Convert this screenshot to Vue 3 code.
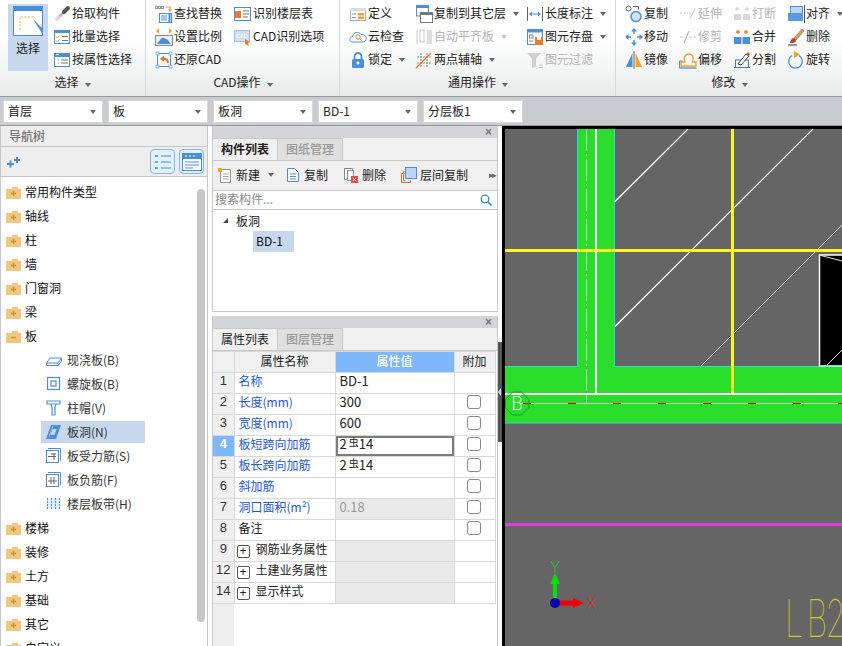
<script setup>
const blue = '#4a8fd8'
const org = '#f0a030'
const gry = '#8a8a8a'
const off = '#c8c8c8'

const icons = {
  pick: `<path d="M3 15 12 6" stroke="#b8b8b8" stroke-width="3"/><path d="M3 15 7 11" stroke="#d8d8d8" stroke-width="3"/><path d="M11 7 15 3" stroke="#555" stroke-width="4" stroke-linecap="round"/>`,
  batch: `<rect x="1.500" y="2.500" width="15" height="13" fill="#fff" stroke="${blue}"/><rect x="1" y="2" width="16" height="3" fill="${blue}"/><path d="M3 8.500 4.500 10 6.500 7.500M3 12.500 4.500 14 6.500 11.500" fill="none" stroke="${org}"/><path d="M9 8.500h6M9 12.500h6" stroke="#777"/>`,
  attr: `<rect x="1.500" y="2.500" width="15" height="13" fill="#fff" stroke="${blue}"/><rect x="1" y="2" width="16" height="4" fill="${blue}"/><path d="M3 3.500h3" stroke="#fff"/><path d="M5 9h1M5 12h1" stroke="${blue}"/><path d="M8 9h7M8 12h7" stroke="#777"/>`,
  find: `<path d="M0 1h9v3H0z" fill="#999"/><path d="M1 2.500h1M4 2.500h1M7 2.500h1" stroke="#fff"/><path d="M11 2h4v3" fill="none" stroke="${org}" stroke-width="1.200"/><path d="m13 4.500 2 2.500 2-2.500z" fill="${org}"/><rect x="4.500" y="8.500" width="12" height="9" fill="#fff" stroke="${blue}"/><path d="M6 11h6M6 13h6M6 15h6" stroke="${blue}"/><path d="M14.500 9v8" stroke="${blue}" stroke-width="2"/>`,
  floors: `<rect x=".5" y="2.500" width="16" height="13" fill="#fff" stroke="${blue}"/><rect x="1" y="6" width="6" height="7" fill="#ef7b22"/><path d="M9 6h6M9 9h6M9 12h5" stroke="#777"/>`,
  scale: `<path d="M1 3 4 0v6zM17 3l-3-3v6z" fill="${org}"/><rect x=".5" y="7.500" width="17" height="10" fill="#eee" stroke="#888"/><path d="M2 16c2-2 3-5 5-6s3 1 4 1 2 1 5 5z" fill="${blue}"/>`,
  cad: `<rect x=".5" y="2.500" width="15" height="11" fill="#cfe0f5" stroke="#9fbce0"/><text x="2" y="10" font-size="5.500" fill="#fff" font-family="Liberation Sans">CAD</text><path d="M11 11l5 3-2 1 1 3-4-2z" fill="#ef7b22"/>`,
  restore: `<rect x="2.500" y="2.500" width="13" height="13" fill="none" stroke="${blue}"/><path d="M1 1h3v3H1zM14 1h3v3h-3zM1 14h3v3H1zM14 14h3v3h-3z" fill="#fff" stroke="${blue}" stroke-width=".6"/><path d="M13 12c0-3-2-5-5-4" fill="none" stroke="#e2701f" stroke-width="1.800"/><path d="m9 4.500-4 3.500 4 2.500z" fill="#e2701f"/>`,
  define: `<rect x="1.500" y="3.500" width="15" height="12" fill="#fff" stroke="#aaa"/><rect x="1" y="3" width="16" height="3" fill="#d4dde8"/><rect x="9" y="8" width="6" height="2.500" fill="${org}"/><rect x="9" y="11.500" width="6" height="2.500" fill="${org}"/><path d="M3 9h4M3 12.500h4" stroke="#999"/>`,
  cloud: `<path d="M4 14C0 14 0 9 3.500 8.500 4 4 10 3 12 6.500c4-.5 6 2.500 5 5-.5 2-2 2.500-3 2.500z" fill="#fff" stroke="${blue}"/><circle cx="9" cy="9" r="2.200" fill="none" stroke="#ef7b22"/><path d="m10.500 10.500 2 2" stroke="#ef7b22"/>`,
  lock: `<path d="M5.500 8V5.500a3.500 3.500 0 0 1 7 0V8" fill="none" stroke="${blue}" stroke-width="1.800"/><rect x="3" y="8" width="12" height="9" rx="1.500" fill="${blue}"/><circle cx="9" cy="12" r="1.500" fill="#fff"/>`,
  copyTo: `<rect x="1.500" y="1" width="12" height="10" fill="#fff" stroke="${blue}"/><rect x="1" y="0" width="13" height="3" fill="${blue}"/><rect x="5.500" y="7.500" width="12" height="10" fill="#fff" stroke="#777"/><rect x="5" y="7" width="13" height="3" fill="#777"/>`,
  autoAlign: `<path d="M2 2v14" stroke="${off}"/><rect x="5" y="2" width="4" height="12" fill="none" stroke="${off}"/><rect x="12" y="2" width="5" height="14" fill="#ddd"/>`,
  twoPoint: `<path d="M6 2v14M12 2v14M2 6h14M2 12h14" stroke="#888" stroke-dasharray="2 1"/><path d="M1 17 16 2" stroke="#e2701f" stroke-width="1.200"/>`,
  dim: `<path d="M1.500 2v14M16.500 2v14" stroke="#666"/><path d="M4 9h10" stroke="${blue}"/><path d="M3 9l3-2.500v5zM15 9l-3-2.500v5z" fill="${blue}"/>`,
  save: `<rect x="1.500" y="1.500" width="15" height="15" fill="#fff" stroke="${blue}"/><rect x="1" y="1" width="16" height="3.500" fill="${blue}"/><rect x="3.500" y="7" width="3.500" height="3" fill="none" stroke="${gry}"/><path d="M3 13h4" stroke="${gry}"/><rect x="9" y="9" width="8" height="8" fill="#ef7b22"/><rect x="11" y="9" width="4" height="3" fill="#fff"/>`,
  filter: `<path d="M1 2h14l-5 6v8l-4 1V8z" fill="#d0d0d0"/><path d="M13 14h4M13 16.500h4" stroke="${off}"/>`,
  copy: `<circle cx="3.500" cy="3.500" r="2.500" fill="none" stroke="#666"/><circle cx="11" cy="11.500" r="5" fill="#cfe2f7" stroke="${blue}" stroke-width="1.500"/><path d="M8 1.500h5.500v3" fill="none" stroke="#666"/>`,
  extend: `<path d="M1 8h8" stroke="${off}" stroke-dasharray="2 1.500"/><path d="M11 14l5-11" stroke="${off}"/><path d="M10 8h2" stroke="${off}"/>`,
  breakIt: `<path d="M2 4h4M12 4h4M4 2v4M14 2v4" stroke="${off}"/><rect x="1" y="9" width="7" height="6" fill="#d8d8d8"/><rect x="10" y="9" width="7" height="6" fill="#d8d8d8"/>`,
  align: `<rect x="3.500" y="1.500" width="12" height="7" fill="#bcd6f4" stroke="${blue}"/><rect x="1" y="8" width="15" height="8" fill="#5a9ae0"/><path d="M17.500 0v18" stroke="#555"/>`,
  move: `<path d="M9 0 6 3.500h6zM9 18l-3-3.500h6zM0 9l3.500-3v6zM18 9l-3.500-3v6z" fill="${blue}"/><path d="M9 3v3M9 12v3M3 9h3M12 9h3" stroke="${blue}" stroke-width="1.400"/>`,
  trim: `<path d="M1 9h5M10 9h7" stroke="${off}" stroke-dasharray="3 1.500"/><path d="M5 15 10 3" stroke="#aaa"/>`,
  merge: `<path d="M5 2v4M3 4h4M13 2v4M11 4h4" stroke="#ef7b22" stroke-width="1.500"/><rect x="1" y="9" width="16" height="7" fill="${blue}"/><path d="M9 9v7" stroke="#fff"/>`,
  erase: `<path d="M1 17h9" stroke="#333"/><path d="M7 10 15 1l2 2-8 9z" fill="#d4a060" stroke="#7a5a30" stroke-width=".6"/><path d="M3 15c0-3 2-5 4-5l2 2c0 2-3 4-6 3z" fill="#b5431c"/>`,
  mirror: `<path d="M7.500 2v14H1z" fill="${blue}"/><path d="M10.500 2v14H17z" fill="${org}"/><path d="M9 0v18" stroke="#666"/>`,
  offset: `<path d="M2 15v-4h4c-2-5 0-8 4-8s5 3 3.500 8H17v4z" fill="none" stroke="${org}" stroke-width="1.300"/><path d="M.5 17h17" stroke="${blue}" stroke-width="1.300"/><path d="M.5 17v-7h3" fill="none" stroke="${blue}"/>`,
  split: `<path d="M1 16.500h16M2.500 9v8M15.500 9v8M2 9h14" stroke="#5577a8"/><path d="M5 13 13 3l3 2-8 9z" fill="#fff" stroke="#444"/><path d="M13 3l3 2 1-2-2-2z" fill="#d2582a"/>`,
  rotate: `<path d="M5 4.500a6.800 6.800 0 1 0 7 0" fill="none" stroke="${blue}" stroke-width="1.300"/><path d="M7 0v7l6-3.500z" fill="${org}"/>`,
}

const navIcons = {
  plate: `<path d="M1.500 12 5 7h11.500v3L13 14.500H1.500z" fill="#fff" stroke="${blue}"/><path d="M1.500 12H13l3.500-5M13 12v2.500" fill="none" stroke="${blue}"/>`,
  spiral: `<rect x="2.500" y="2.500" width="12" height="12" fill="none" stroke="${blue}" stroke-width="1.200"/><rect x="6" y="6" width="5" height="5" fill="none" stroke="${blue}" stroke-width="1.200"/>`,
  cap: `<path d="M2 2h13v3h-13zM6 5l1 3v8h3V8l1-3" fill="#fff" stroke="${blue}" stroke-width="1.200"/>`,
  hole: `<path d="M6 2h10l-5 14H1z" fill="${blue}"/><path d="M7.500 6h4L9.500 12h-4z" fill="#c6d7ee"/><path d="M4 14 8 3" stroke="#c6d7ee" stroke-width=".7"/>`,
  rebar: `<rect x="1.500" y="3.500" width="12" height="12" fill="#fff" stroke="${blue}"/><path d="M3 1.500h12.500V14" fill="none" stroke="${blue}"/><path d="M3 9.500h8M9 6v7M6 7h5" fill="none" stroke="#666"/>`,
  neg: `<rect x="1.500" y="3.500" width="12" height="12" fill="#fff" stroke="${blue}"/><path d="M3 1.500h12.500V14" fill="none" stroke="${blue}"/><path d="M3 10h9M6 6v7M9 6v7" fill="none" stroke="#666"/>`,
  band: `<rect x="2" y="3" width="13" height="11" fill="#e3eefa"/><path d="M2.500 3v11M14.500 3v11M6.500 3v11M10.500 3v11" stroke="${blue}" stroke-dasharray="2 1"/>`,
}

const groups = [
  {
    name: '选择', cls: 'g1',
    cols: [[
      { t: '拾取构件', i: 'pick' },
      { t: '批量选择', i: 'batch' },
      { t: '按属性选择', i: 'attr' },
    ]],
  },
  {
    name: 'CAD操作', cls: 'g2',
    cols: [
      [{ t: '查找替换', i: 'find' }, { t: '设置比例', i: 'scale' }, { t: '还原CAD', i: 'restore' }],
      [{ t: '识别楼层表', i: 'floors' }, { t: 'CAD识别选项', i: 'cad' }],
    ],
  },
  {
    name: '通用操作', cls: 'g3',
    cols: [
      [{ t: '定义', i: 'define' }, { t: '云检查', i: 'cloud' }, { t: '锁定', i: 'lock', drop: true }],
      [{ t: '复制到其它层', i: 'copyTo', drop: true }, { t: '自动平齐板', i: 'autoAlign', drop: true, off: true }, { t: '两点辅轴', i: 'twoPoint', drop: true }],
      [{ t: '长度标注', i: 'dim', drop: true }, { t: '图元存盘', i: 'save', drop: true }, { t: '图元过滤', i: 'filter', off: true }],
    ],
  },
  {
    name: '修改', cls: 'g4',
    cols: [
      [{ t: '复制', i: 'copy' }, { t: '移动', i: 'move' }, { t: '镜像', i: 'mirror' }],
      [{ t: '延伸', i: 'extend', off: true }, { t: '修剪', i: 'trim', off: true }, { t: '偏移', i: 'offset' }],
      [{ t: '打断', i: 'breakIt', off: true }, { t: '合并', i: 'merge' }, { t: '分割', i: 'split' }],
      [{ t: '对齐', i: 'align', drop: true }, { t: '删除', i: 'erase' }, { t: '旋转', i: 'rotate' }],
    ],
  },
]

const selects = ['首层', '板', '板洞', 'BD-1', '分层板1']

const navTree = [
  { t: '常用构件类型' }, { t: '轴线' }, { t: '柱' }, { t: '墙' }, { t: '门窗洞' }, { t: '梁' },
  { t: '板', open: true },
  { t: '现浇板(B)', i: 'plate' }, { t: '螺旋板(B)', i: 'spiral' }, { t: '柱帽(V)', i: 'cap' },
  { t: '板洞(N)', i: 'hole', sel: true }, { t: '板受力筋(S)', i: 'rebar' }, { t: '板负筋(F)', i: 'neg' },
  { t: '楼层板带(H)', i: 'band' },
  { t: '楼梯' }, { t: '装修' }, { t: '土方' }, { t: '基础' }, { t: '其它' }, { t: '自定义' },
]

const props = [
  { n: 1, name: '名称', val: 'BD-1' },
  { n: 2, name: '长度(mm)', val: '300', chk: true },
  { n: 3, name: '宽度(mm)', val: '600', chk: true },
  { n: 4, name: '板短跨向加筋', bar: true, chk: true, active: true },
  { n: 5, name: '板长跨向加筋', bar: true, chk: true },
  { n: 6, name: '斜加筋', val: '', chk: true },
  { n: 7, name: '洞口面积(m²)', val: '0.18', chk: true, calc: true },
  { n: 8, name: '备注', val: '', chk: true, plain: true },
  { n: 9, name: '钢筋业务属性', fold: true },
  { n: 12, name: '土建业务属性', fold: true },
  { n: 14, name: '显示样式', fold: true },
]

const redDashes = [523, 568, 613, 658, 703, 748, 793, 838]
</script>

<template>
  <div class="app">
    <header class="ribbon">
      <section v-for="g in groups" :key="g.name" class="group" :class="g.cls">
        <div class="group-body">
          <div v-if="g.cls === 'g1'" class="big-btn">
            <svg width="30" height="30" viewBox="0 0 30 30">
              <rect x=".5" y=".5" width="29" height="29" fill="#fff" stroke="#4a8fd8" />
              <rect x="0" y="0" width="30" height="5" fill="#4a8fd8" />
              <path d="M7 24V11h15" fill="none" stroke="#f5a623" stroke-dasharray="2 1.500" />
              <path d="M20 13v16h9.500v-1z M20 13l9 9v7h-9z" fill="#4a8fd8" />
            </svg>
            <span>选择</span>
          </div>
          <div v-for="(col, ci) in g.cols" :key="ci" class="col">
            <div v-for="item in col" :key="item.t" class="tool" :class="{ off: item.off }">
              <svg class="tool-icon" width="18" height="18" viewBox="0 0 18 18" v-html="icons[item.i]"></svg>
              <span>{{ item.t }}</span>
              <i v-if="item.drop" class="caret"></i>
            </div>
          </div>
        </div>
        <div class="group-label">{{ g.name }}<i class="caret"></i></div>
      </section>
    </header>

    <div class="selectbar">
      <div v-for="s in selects" :key="s" class="select">
        <span>{{ s }}</span>
        <i class="caret"></i>
      </div>
    </div>

    <main class="workspace">
      <aside class="nav">
        <div class="nav-title">导航树</div>
        <div class="nav-tools">
          <svg width="14" height="12" viewBox="0 0 14 12">
            <path d="M0 8h7M3.500 4.500v7M7 4h6M10 1v6" stroke="#4a8fd8" stroke-width="2" />
          </svg>
          <div class="nav-tool-btns">
            <button class="nav-btn">
              <svg width="18" height="16" viewBox="0 0 18 16">
                <path d="M1 2h3M1 8h3M1 14h3" stroke="#4a8fd8" stroke-width="1.500" />
                <path d="M7 2h10M7 8h10M7 14h10" stroke="#4a8fd8" />
              </svg>
            </button>
            <button class="nav-btn">
              <svg width="20" height="18" viewBox="0 0 20 18">
                <rect x=".5" y=".5" width="19" height="17" fill="#fff" stroke="#4a8fd8" />
                <rect x="0" y="0" width="20" height="6" fill="#4a8fd8" />
                <path d="M3 3h2M7 3h2M11 3h2" stroke="#fff" />
                <path d="M3 9h14M3 12h14M3 15h8" stroke="#4a8fd8" />
              </svg>
            </button>
          </div>
        </div>
        <div class="nav-body">
          <div class="nav-scroll"></div>
          <div v-for="n in navTree" :key="n.t" class="nav-row" :class="{ child: n.i, selected: n.sel }">
            <svg v-if="n.i" width="18" height="18" viewBox="0 0 18 18" v-html="navIcons[n.i]"></svg>
            <svg v-else width="15" height="13" viewBox="0 0 15 13">
              <path d="M0 3h6V1h6v2h3v10H0z" fill="#efc87e" />
              <path d="M5 7.500h5" stroke="#c2913f" stroke-width="1.500" />
              <path v-if="!n.open" d="M7.500 5v5" stroke="#c2913f" stroke-width="1.500" />
            </svg>
            <span>{{ n.t }}</span>
          </div>
        </div>
      </aside>

      <div class="mid">
        <section class="panel list-panel">
          <div class="panel-bar">×</div>
          <div class="tabs">
            <div class="tab active strong">构件列表</div>
            <div class="tab">图纸管理</div>
          </div>
          <div class="list-tools">
            <div class="lt new">
              <svg width="16" height="16" viewBox="0 0 16 16">
                <path d="M3.500 2.500h10v13h-10z" fill="#fff" stroke="#999" />
                <path d="M6 7h6M6 9.500h6M6 12h6" stroke="#aaa" />
                <rect x="1" y="1" width="4" height="4" fill="#f5a623" />
              </svg>
              <span>新建</span><i class="caret"></i>
            </div>
            <div class="lt copy">
              <svg width="14" height="16" viewBox="0 0 14 16">
                <path d="M1.500 1.500h7l4 4v9h-11z" fill="#fff" stroke="#4a8fd8" />
                <path d="M4 7h6M4 9.500h6M4 12h6" stroke="#4a8fd8" />
              </svg>
              <span>复制</span>
            </div>
            <div class="lt del">
              <svg width="16" height="16" viewBox="0 0 16 16">
                <path d="M1.500 1.500h8v11h-8z" fill="#fff" stroke="#888" />
                <path d="M4.500 3.500h6v10h-6z" fill="#fff" stroke="#888" />
                <rect x="8" y="9" width="7" height="7" fill="#d9534f" />
                <path d="m10 11 3 3M13 11l-3 3" stroke="#fff" />
              </svg>
              <span>删除</span>
            </div>
            <div class="lt floor">
              <svg width="16" height="16" viewBox="0 0 16 16">
                <path d="M.5 6.500h3M.5 6.500v9h9v-2M2.500 4.500h1M2.500 4.500v9h2" fill="none" stroke="#e2701f" />
                <rect x="4.500" y=".5" width="11" height="11" fill="#bcd6f4" stroke="#4a8fd8" />
              </svg>
              <span>层间复制</span>
            </div>
            <span class="more">▸▸</span>
          </div>
          <div class="search">
            <input placeholder="搜索构件..." />
            <svg width="12" height="12" viewBox="0 0 12 12">
              <circle cx="5" cy="5" r="3.800" fill="none" stroke="#2e8bc8" stroke-width="1.300" />
              <path d="m8 8 3.500 3.500" stroke="#2e8bc8" stroke-width="1.600" />
            </svg>
          </div>
          <div class="list-tree">
            <div class="lt-root"><i class="corner"></i>板洞</div>
            <div class="lt-leaf">BD-1</div>
          </div>
        </section>

        <section class="panel prop-panel">
          <div class="panel-bar">×</div>
          <div class="tabs">
            <div class="tab active">属性列表</div>
            <div class="tab">图层管理</div>
          </div>
          <div class="prop-body">
            <table class="prop-table">
              <colgroup>
                <col class="c-no" /><col class="c-name" /><col class="c-val" /><col class="c-add" />
              </colgroup>
              <thead>
                <tr>
                  <th class="no"></th>
                  <th>属性名称</th>
                  <th class="cur">属性值</th>
                  <th>附加</th>
                </tr>
              </thead>
              <tbody>
                <tr v-for="p in props" :key="p.n">
                  <td class="no" :class="{ cur: p.active }">{{ p.n }}</td>
                  <td class="name" :class="{ plain: p.plain || p.fold, fold: p.fold }">
                    <i v-if="p.fold" class="plus">+</i>{{ p.name }}
                  </td>
                  <td class="val" :class="{ calc: p.calc, grey: p.fold, focus: p.active }">
                    <template v-if="p.bar">2<sup>虫</sup>14</template>
                    <template v-else>{{ p.val }}</template>
                  </td>
                  <td class="add"><i v-if="p.chk" class="check"></i></td>
                </tr>
              </tbody>
            </table>
          </div>
        </section>
      </div>

      <div class="splitter"><div class="split-handle"></div></div>

      <div class="canvas">
        <svg width="337" height="517" viewBox="505 129 337 517">
          <rect x="505" y="129" width="337" height="517" fill="#656565" />

          <rect x="577" y="129" width="38" height="238" fill="#2bdd2b" />
          <rect x="505" y="366" width="337" height="57" fill="#2bdd2b" />
          <path d="M505 366.500h72.500V129M614.500 129v237.500H842M505 423h337" fill="none" stroke="#22e0e0" />

          <path d="M615 201.500 688 129M615 326.500 813 129" stroke="#fff" stroke-width="1.200" />
          <path d="M701 366 842 225" stroke="#d8d8d8" />

          <rect x="819.500" y="255" width="30" height="111" fill="#000" stroke="#fff" stroke-width="1.500" />
          <path d="M819 255 842 261M827 365 842 350" stroke="#ddd" />
          <path d="M819 366h23" stroke="#7adcdc" />

          <rect x="595" y="129" width="2" height="266" fill="#fff" />
          <path d="M586.500 129V394" stroke="#c8c8c8" stroke-dasharray="22 3 2 3" />
          <path d="M586.500 394v9" stroke="#c8c8c8" />
          <rect x="731" y="129" width="3" height="265" fill="#fff32a" />
          <rect x="505" y="249" width="337" height="3" fill="#fff32a" />
          <rect x="505" y="393" width="337" height="2" fill="#fff" />
          <path d="M520 403.500h322" stroke="#c8c8c8" />
          <rect v-for="x in redDashes" :key="x" :x="x" y="403" width="8" height="1" fill="#f00000" />

          <path d="M512.500 392h9l7.500 7.500v8l-7.500 7.500h-9l-7-7.500v-8z" fill="none" stroke="#1a9a2a" />
          <text x="517" y="410" class="axis-b">B</text>

          <rect x="505" y="523" width="337" height="3" fill="#e040e0" />

          <path d="M555 603v-22" stroke="#00e000" stroke-width="4" />
          <path d="m555 573 5 11h-10z" fill="#00e000" />
          <path d="M555 603h20" stroke="#f00000" stroke-width="5" />
          <path d="m584 603-11-5v10z" fill="#f00000" />
          <circle cx="555" cy="603" r="5" fill="#0000b0" />
          <text x="555" y="573" class="axis-y">Y</text>
          <text x="591" y="609" class="axis-x">X</text>
          <text transform="translate(785 637) scale(.62 1)" class="cad-label">L<tspan dx="6">B</tspan><tspan dx="-3">2</tspan></text>
        </svg>
      </div>
    </main>
  </div>
</template>

<style>
html, body {
  margin: 0;
  overflow: hidden;
}
</style>

<style scoped>
.app {
  width: 842px;
  height: 646px;
  overflow: hidden;
  background: #fff;
  color: #222;
  font: 12px/1.2 "Noto Sans CJK SC", "Noto Sans", sans-serif;
  display: flex;
  flex-direction: column;
}

/* ribbon */
.ribbon {
  height: 96px;
  flex: none;
  display: flex;
  background: linear-gradient(#fff 40%, #e9ebeb);
  border-bottom: 1px solid #98999b;
}
.group {
  box-sizing: border-box;
  border-right: 1px solid #d6d8d8;
  display: flex;
  flex-direction: column;
}
.g1 { width: 146px; padding-left: 8px; }
.g2 { width: 194px; padding-left: 9px; }
.g3 { width: 276px; padding-left: 9px; }
.g4 { flex: 1; padding-left: 9px; border-right: 0; }
.group-body {
  display: flex;
  height: 70px;
  padding-top: 2px;
}
.col { display: flex; flex-direction: column; }
.g1 .col { margin-left: 5px; }
.g2 .col:nth-child(1) { width: 79px; }
.g3 .col:nth-child(1) { width: 66px; }
.g3 .col:nth-child(2) { width: 111px; }
.g4 .col { width: 54px; }
.tool {
  height: 23px;
  display: flex;
  align-items: center;
  gap: 1px;
  white-space: nowrap;
}
.tool.off { color: #b5b5b5; }
.tool-icon { flex: none; }
.caret {
  display: inline-block;
  width: 0;
  height: 0;
  margin-left: 6px;
  border: 3px solid transparent;
  border-top: 4px solid #666;
  border-bottom: 0;
}
.tool.off .caret { border-top-color: #c4c4c4; }
.big-btn {
  width: 40px;
  height: 67px;
  margin-top: 2px;
  background: #c6d7ee;
  display: flex;
  flex-direction: column;
  align-items: center;
  padding-top: 2px;
  box-sizing: border-box;
  gap: 5px;
}
.group-label {
  text-align: center;
  height: 22px;
  line-height: 20px;
  padding-right: 8px;
}

/* floor / type selectors */
.selectbar {
  height: 28px;
  flex: none;
  display: flex;
  gap: 5px;
  padding: 3px 0 0 3px;
  box-sizing: border-box;
  background: #c9cbce;
}
.select {
  box-sizing: border-box;
  width: 100px;
  height: 23px;
  background: #fff;
  border: 1px solid #d8d8d8;
  display: flex;
  align-items: center;
  justify-content: space-between;
  padding: 0 6px 0 4px;
}

/* body */
.workspace {
  flex: 1;
  min-height: 0;
  display: flex;
  border-top: 1px solid #98999b;
}

.nav {
  width: 208px;
  flex: none;
  margin-right: 4px;
  display: flex;
  flex-direction: column;
  box-sizing: border-box;
  border-left: 1px solid #c8c8c8;
  border-right: 1px solid #c8c8c8;
}
.nav-title {
  height: 21px;
  line-height: 20px;
  padding-left: 8px;
  background: #eeeeee;
  color: #777;
  font-weight: 500;
  border-bottom: 1px solid #c8c8c8;
  box-sizing: border-box;
}
.nav-tools {
  height: 30px;
  flex: none;
  box-sizing: border-box;
  background: #eeeeee;
  border-bottom: 1px solid #c8c8c8;
  display: flex;
  align-items: center;
  justify-content: space-between;
  padding: 0 3px 0 6px;
}
.nav-tool-btns { display: flex; gap: 4px; }
.nav-btn {
  width: 25px;
  height: 25px;
  padding: 0;
  display: flex;
  align-items: center;
  justify-content: center;
  background: #e3f0fd;
  border: 1px solid #7fb8f8;
  border-radius: 4px;
}
.nav-body {
  flex: 1;
  min-height: 0;
  overflow: hidden;
  position: relative;
  padding-top: 3px;
}
.nav-scroll {
  position: absolute;
  top: 12px;
  right: 2px;
  width: 8px;
  height: 433px;
  background: #c8c8c8;
  border-radius: 4px;
}
.nav-row {
  height: 24px;
  display: flex;
  align-items: center;
  gap: 4px;
  padding-left: 5px;
  color: #111;
}
.nav-row.child {
  margin-left: 40px;
  width: 104px;
  box-sizing: border-box;
  padding-left: 4px;
  border-top: 1px solid transparent;
  border-bottom: 1px solid transparent;
  background-clip: padding-box;
  color: #333;
}
.nav-row.selected { background-color: #c6d7ee; }

.mid {
  width: 286px;
  flex: none;
  display: flex;
  flex-direction: column;
  gap: 4px;
}
.panel {
  box-sizing: border-box;
  border-left: 1px solid #c8c8c8;
  border-right: 1px solid #c8c8c8;
  display: flex;
  flex-direction: column;
}
.list-panel {
  height: 186px;
  flex: none;
  border-bottom: 1px solid #c8c8c8;
}
.prop-panel { flex: 1; min-height: 0; }
.panel-bar {
  height: 12px;
  flex: none;
  background: #d3d5d9;
  color: #777;
  text-align: right;
  padding-right: 5px;
  font: bold 12px/12px "Liberation Sans", sans-serif;
}
.tabs {
  height: 22px;
  flex: none;
  display: flex;
  background: #f0f0f0;
  border-bottom: 1px solid #c8c8c8;
}
.tab {
  width: 65px;
  box-sizing: border-box;
  line-height: 19px;
  padding-left: 8px;
  background: #e0e0e0;
  color: #999;
  font-weight: 500;
  border-right: 1px solid #c8c8c8;
  border-top: 1px solid #c8c8c8;
}
.tab.active { background: #f0f0f0; color: #222; font-weight: 400; }
.tab.strong { font-weight: 700; }

.list-tools {
  height: 30px;
  flex: none;
  box-sizing: border-box;
  background: #f0f0f0;
  border-bottom: 1px solid #c8c8c8;
  display: flex;
  align-items: center;
  padding: 0 0 1px 4px;
}
.lt { display: flex; align-items: center; gap: 3px; }
.lt.new { width: 69px; }
.lt.copy { width: 57px; gap: 4px; }
.lt.del { width: 58px; }
.lt.floor { width: 88px; }
.lt .caret { margin-left: 5px; }
.more { color: #666; font-size: 9px; letter-spacing: -2px; }

.search {
  height: 19px;
  flex: none;
  box-sizing: border-box;
  border-bottom: 1px solid #c8c8c8;
  display: flex;
  align-items: center;
  padding-right: 5px;
}
.search input {
  flex: 1;
  min-width: 0;
  border: 0;
  outline: 0;
  padding: 0 0 1px 2px;
  font: inherit;
  background: transparent;
}
.search input::placeholder { color: #8a8a8a; opacity: 1; }

.list-tree { flex: 1; }
.lt-root {
  height: 21px;
  line-height: 20px;
  padding-left: 10px;
  display: flex;
  align-items: center;
  gap: 8px;
}
.corner {
  width: 0;
  height: 0;
  border-left: 5px solid transparent;
  border-bottom: 5px solid #444;
}
.lt-leaf {
  width: 41px;
  height: 21px;
  line-height: 20px;
  margin-left: 40px;
  padding-left: 3px;
  box-sizing: border-box;
  background: #c6d7ee;
  color: #111;
}

.prop-body {
  flex: 1;
  min-height: 0;
  background: linear-gradient(90deg, #eeeeee 21px, #fff 21px);
}
.prop-table {
  table-layout: fixed;
  border-collapse: collapse;
  width: 282px;
  background: #fff;
}
.c-no { width: 21px; }
.c-name { width: 101px; }
.c-val { width: 119px; }
.c-add { width: 41px; }
.prop-table th, .prop-table td {
  height: 21px;
  padding: 0 0 4px;
  border: 1px solid #d8d8d8;
  font-weight: 400;
  white-space: nowrap;
  overflow: hidden;
  box-sizing: border-box;
}
.prop-table th { background: #f0f0f0; text-align: center; padding-bottom: 2px; }
.prop-table th.cur { background: #7fb8f8; color: #fff; font-weight: 500; }
.prop-table .no {
  background: #f0f0f0;
  text-align: center;
  color: #333;
  font-family: "Liberation Sans", sans-serif;
  font-size: 13px;
  border-left: 0;
}
.prop-table .no.cur { background: #7fb8f8; color: #fff; font-weight: 700; }
.prop-table .name { color: #2458d8; padding-left: 4px; }
.prop-table .name.plain { color: #222; }
.prop-table .name.fold { padding-left: 2px; padding-bottom: 2px; }
.prop-table .val { padding-left: 4px; font-size: 13px; }
.val.calc { background: #eaeaea; color: #9a9a9a; }
.val.grey { background: #e9e9e9; }
.prop-table td.focus {
  box-shadow: inset 0 0 0 2px #7c7c7c;
}
.val sup {
  font-size: 10px;
  line-height: 0;
  vertical-align: 3px;
  margin: 0 0 0 2px;
}
.prop-table .add { text-align: center; padding-right: 1px; }
.check {
  display: block;
  width: 12px;
  height: 12px;
  margin: 0 auto;
  background: #fff;
  border: 1px solid #8a8a8a;
  border-radius: 3px;
}
.plus {
  display: inline-block;
  box-sizing: border-box;
  width: 13px;
  height: 13px;
  margin: 0 6px 0 0;
  border: 1px solid #555;
  border-radius: 2px;
  font: 12px/11px "Liberation Sans", sans-serif;
  text-align: center;
  vertical-align: -1px;
}

.splitter {
  width: 4px;
  flex: none;
  padding-top: 216px;
  box-sizing: border-box;
}
.split-handle {
  position: relative;
  height: 100px;
  background: #555;
}
.split-handle::after {
  content: "";
  position: absolute;
  left: 0;
  top: 46px;
  border: 4px solid transparent;
  border-left: 0;
  border-right: 3px solid #ddd;
}

.canvas {
  flex: 1;
  min-width: 0;
  border-left: 3px solid #000;
  border-top: 3px solid #000;
}
.canvas svg { display: block; }
.axis-b {
  fill: #fff;
  font: 200 18px Inter, sans-serif;
  text-anchor: middle;
}
.axis-y {
  fill: #30d030;
  font: 200 16px Inter, sans-serif;
  text-anchor: middle;
}
.axis-x {
  fill: #f02020;
  font: 200 16px Inter, sans-serif;
  text-anchor: middle;
}
.cad-label {
  fill: #cccc28;
  font: 100 52px Inter, sans-serif;
}
</style>
